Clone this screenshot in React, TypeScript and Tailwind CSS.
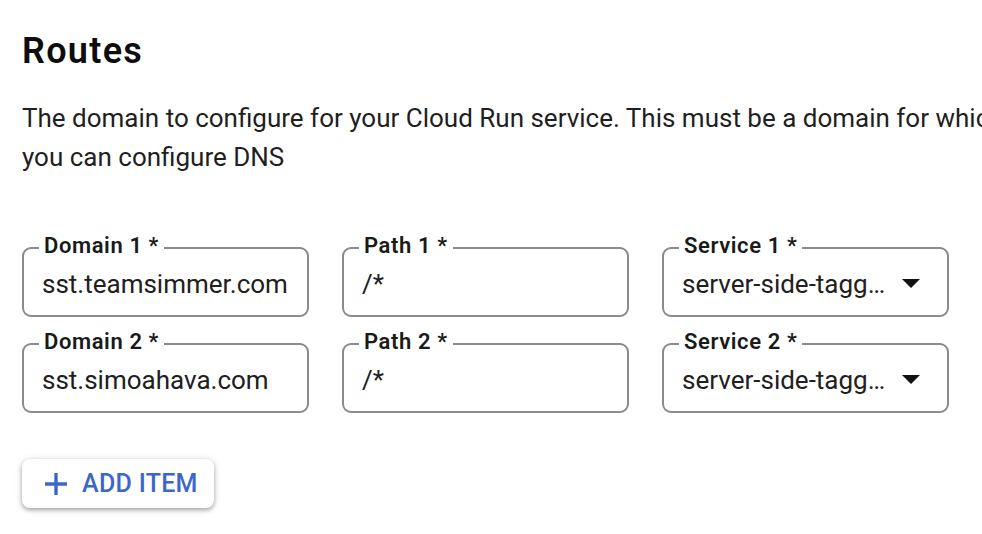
import React from "react";

const font = { fontFamily: "Roboto, 'Liberation Sans', sans-serif" };

function Field({ label, value, select }: { label: string; value: string; select?: boolean }) {
  return (
    <div className="relative w-[287px] h-[70px] border-2 border-[#8b8b8b] rounded-[9px] shrink-0">
      <span className="absolute left-[15px] -top-[14px] px-[5px] bg-white text-[22px] leading-[22px] font-semibold tracking-[0.6px] text-[#1a1a1a]">
        {label}
      </span>
      <div className="flex items-center h-full pl-[18px] pr-[27px] pt-[3px]">
        <span className="text-[26px] leading-[30px] text-[#202020] whitespace-nowrap flex-1">{value}</span>
        {select && (
          <svg width="18" height="9" viewBox="0 0 18 9" className="shrink-0">
            <path d="M0 0 L18 0 L9 9 Z" fill="#111" />
          </svg>
        )}
      </div>
    </div>
  );
}

export default function App() {
  return (
    <div className="w-[982px] h-[534px] overflow-hidden bg-white pl-[22px]" style={font}>
      <h1 className="mt-[29px] text-[36px] leading-[44px] font-semibold tracking-[1.3px] text-[#0d0d0d]">Routes</h1>
      <p className="mt-[26px] text-[26px] leading-[39px] text-[#1f1f1f] whitespace-nowrap">
        The domain to configure for your Cloud Run service. This must be a domain for which
        <br />
        you can configure DNS
      </p>
      <div className="mt-[70px] flex flex-col gap-[26px]">
        <div className="flex gap-[33px]">
          <Field label="Domain 1 *" value="sst.teamsimmer.com" />
          <Field label="Path 1 *" value="/*" />
          <Field label="Service 1 *" value="server-side-tagg…" select />
        </div>
        <div className="flex gap-[33px]">
          <Field label="Domain 2 *" value="sst.simoahava.com" />
          <Field label="Path 2 *" value="/*" />
          <Field label="Service 2 *" value="server-side-tagg…" select />
        </div>
      </div>
      <button className="mt-[46px] w-[192px] h-[49px] rounded-[8px] bg-white shadow-[0_2px_4px_rgba(0,0,0,0.3),0_1px_8px_rgba(0,0,0,0.12)] flex items-center pl-[22px] gap-[14px] text-[#3b66cb]">
        <svg width="24" height="24" viewBox="0 0 24 24">
          <path d="M12 1 V23 M1 12 H23" stroke="#3b66cb" strokeWidth="3.4" fill="none" />
        </svg>
        <span className="text-[25px] leading-[28px] font-medium tracking-[0.3px]">ADD ITEM</span>
      </button>
    </div>
  );
}
